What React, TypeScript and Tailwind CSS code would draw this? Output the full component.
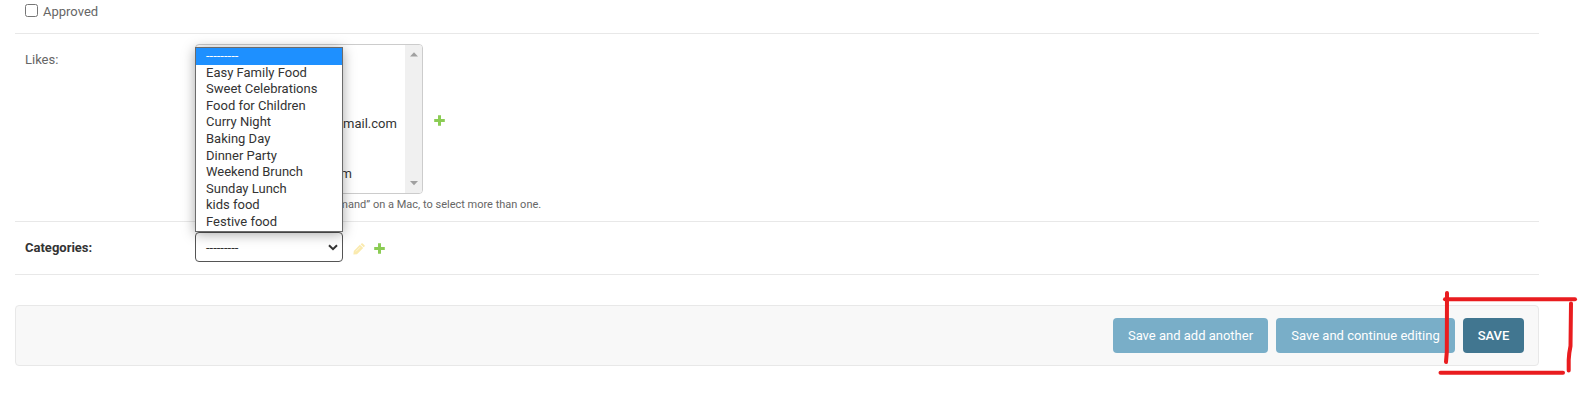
import type { ReactNode } from 'react';

const categories = [
  { name: 'Easy Family Food', height: 'h-[16px]' },
  { name: 'Sweet Celebrations', height: 'h-[17px]' },
  { name: 'Food for Children', height: 'h-[16px]' },
  { name: 'Curry Night', height: 'h-[17px]' },
  { name: 'Baking Day', height: 'h-[17px]' },
  { name: 'Dinner Party', height: 'h-[16px]' },
  { name: 'Weekend Brunch', height: 'h-[17px]' },
  { name: 'Sunday Lunch', height: 'h-[16px]' },
  { name: 'kids food', height: 'h-[17px]' },
  { name: 'Festive food', height: 'h-[16px]' },
];

function PlusIcon() {
  return (
    <svg width="11" height="11" viewBox="0 0 11 11" className="shrink-0" fill="#8bcc54">
      <path d="M4 0.2h3v3.8h3.8v3H7v3.8H4V7H0.2V4H4z" />
    </svg>
  );
}

function PencilIcon() {
  return (
    <svg width="12" height="12" viewBox="0 0 12 12" className="shrink-0">
      <path d="M0.4 11.6 0.8 8 6.9 1.8 10.2 5.1 4 11.2z" fill="#faeaae" />
      <path d="M7.6 1.2 8.5.4Q9.1-.1 9.7.5l1.8 1.8q.5.6 0 1.1l-.8.9z" fill="#faeaae" />
      <path d="M2.9 8.4 7.2 4.1" stroke="#fffaf0" strokeWidth="0.7" />
    </svg>
  );
}

function Button({ children, className }: { children: ReactNode; className: string }) {
  return (
    <button className={`h-[35px] shrink-0 rounded-[4px] text-[13px] leading-[15px] whitespace-nowrap text-white ${className}`}>
      {children}
    </button>
  );
}

function CategoryMenu() {
  return (
    <div className="absolute bottom-[30px] left-0 z-10 h-[185px] w-[148px] border border-[#6b6b6b] bg-white text-[13px] text-[#333] shadow-[0_2px_12px_rgba(0,0,0,0.35)]">
      <div className="h-[17px] bg-[#1e90ff] pl-[10px] leading-[15px] text-white">---------</div>
      {categories.map(({ name, height }) => (
        <div key={name} className={`pl-[10px] leading-[16px] whitespace-nowrap ${height}`}>
          {name}
        </div>
      ))}
    </div>
  );
}

export default function App() {
  return (
    <div className="relative h-[419px] w-[1579px] overflow-hidden bg-white font-['Roboto',sans-serif] text-[13px] text-[#666]">
      <div className="ml-[15px] w-[1524px]">
        <div className="flex h-[34px] border-b border-[#e8e8e8] pl-[10px]">
          <span className="mt-[4px] size-[13px] rounded-[2.5px] border border-[#767676] bg-white" />
          <span className="ml-[5px] h-[24px] leading-[23px]">Approved</span>
        </div>

        <div className="flex h-[188px] border-b border-[#e8e8e8] pt-[10px] pl-[10px]">
          <div className="w-[170px] shrink-0 pt-[7px] leading-[17px]">Likes:</div>
          <div>
            <div className="flex items-center">
              <div className="flex h-[150px] w-[228px] overflow-hidden rounded-[4px] border border-[#ccc] text-[#333]">
                <div className="flex-1 pt-[70px] leading-[17px]">
                  <div className="pl-[147px]">mail.com</div>
                  <div className="mt-[33px] pl-[144.5px]">m</div>
                </div>
                <div className="flex w-[17px] flex-col items-center justify-between bg-[#f0f0f0] py-[7px]">
                  <svg width="8" height="5" viewBox="0 0 8 5" fill="#a0a0a0"><path d="M0 4.5 4 .3l4 4.2z" /></svg>
                  <svg width="8" height="5" viewBox="0 0 8 5" fill="#a0a0a0"><path d="M0 0 4 4.2 8 0z" /></svg>
                </div>
              </div>
              <div className="ml-[11px] pt-[3px]"><PlusIcon /></div>
            </div>
            <div className="mt-[4px] text-[11px] leading-[14px]">
              Hold down “Control”, or “Command” on a Mac, to select more than one.
            </div>
          </div>
        </div>

        <div className="flex h-[53px] border-b border-[#e8e8e8] pt-[10px] pl-[10px]">
          <div className="w-[170px] shrink-0 pt-[7px] leading-[17px] font-bold text-[#333]">Categories:</div>
          <div className="relative flex h-[30px] items-center">
            <div className="flex h-[30px] w-[148px] items-center justify-between rounded-[4px] border border-[#555] bg-white pr-[4px] pl-[10px] text-[#333]">
              <span className="pt-px">---------</span>
              <svg width="10" height="7" viewBox="0 0 10 7" fill="none" stroke="#333" strokeWidth="2"><path d="M1 1.2 5 5.2 9 1.2" /></svg>
            </div>
            <div className="ml-[10px] flex items-center gap-[9px] pt-[3px]">
              <PencilIcon />
              <PlusIcon />
            </div>
            <CategoryMenu />
          </div>
        </div>

        <div className="mt-[30px] flex h-[61px] items-center justify-end gap-2 rounded-[4px] border border-[#e8e8e8] bg-[#f8f8f8] pr-[14px]">
          <Button className="w-[155px] bg-[#79aec8] font-normal">Save and add another</Button>
          <Button className="w-[179px] bg-[#79aec8] font-normal">Save and continue editing</Button>
          <Button className="w-[61px] bg-[#417690] font-medium">SAVE</Button>
        </div>
      </div>

      <svg className="absolute top-[285px] left-[1430px]" width="149" height="100" viewBox="1430 285 149 100" fill="none" stroke="#e91c1f" strokeWidth="4" strokeLinecap="round" strokeLinejoin="round">
        <path d="M1447 293 1446.8 352 1446 362" />
        <path d="M1445 299.3H1575" />
        <path d="M1571 303.5 1570.5 346Q1569 353 1568.7 360V370.5" />
        <path d="M1440.5 372.8H1563" />
      </svg>
    </div>
  );
}
